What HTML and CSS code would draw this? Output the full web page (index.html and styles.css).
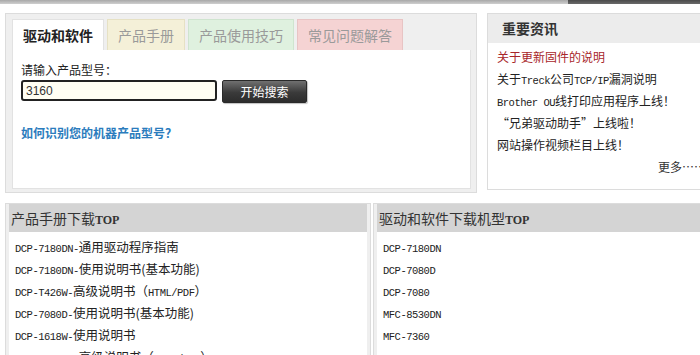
FILE: index.html
```html
<!DOCTYPE html>
<html lang="zh-CN">
<head>
    <meta charset="UTF-8">
    <title>服务与支持</title>
    <link rel="stylesheet" href="styles.css">
</head>
<body>
    <div class="topbar">
        <div class="topbar-light"></div>
        <div class="topbar-dark"></div>
    </div>
    <div class="page">
        <div class="row">
            <section class="search-box">
                <ul class="tabs">
                    <li class="tab tab-active">驱动和软件</li>
                    <li class="tab tab-manual">产品手册</li>
                    <li class="tab tab-tips">产品使用技巧</li>
                    <li class="tab tab-faq">常见问题解答</li>
                </ul>
                <div class="tab-body">
                    <label for="model">请输入产品型号：</label>
                    <div class="search-row">
                        <input id="model" type="text" value="3160">
                        <button>开始搜索</button>
                    </div>
                    <a class="help" href="#">如何识别您的机器产品型号？</a>
                </div>
            </section>
            <section class="news">
                <h3>重要资讯</h3>
                <ul>
                    <li class="hot">关于更新固件的说明</li>
                    <li>关于<span class="en">Treck</span>公司<span class="en">TCP/IP</span>漏洞说明</li>
                    <li><span class="en">Brother OU</span>线打印应用程序上线！</li>
                    <li>“兄弟驱动助手”上线啦！</li>
                    <li>网站操作视频栏目上线！</li>
                </ul>
                <div class="more">更多……</div>
            </section>
        </div>
        <div class="row row-bottom">
            <section class="top-list top-manuals">
                <h3>产品手册下载<span class="cap">TOP</span></h3>
                <ul>
                    <li><span class="en">DCP-7180DN-</span>通用驱动程序指南</li>
                    <li><span class="en">DCP-7180DN-</span>使用说明书(基本功能)</li>
                    <li><span class="en">DCP-T426W-</span>高级说明书（<span class="en">HTML/PDF</span>）</li>
                    <li><span class="en">DCP-7080D-</span>使用说明书(基本功能)</li>
                    <li><span class="en">DCP-1618W-</span>使用说明书</li>
                    <li><span class="en">DCP-T725DW-</span>高级说明书（<span class="en">HTML/PDF</span>）</li>
                </ul>
            </section>
            <section class="top-list top-drivers">
                <h3>驱动和软件下载机型<span class="cap">TOP</span></h3>
                <ul>
                    <li><span class="en">DCP-7180DN</span></li>
                    <li><span class="en">DCP-7080D</span></li>
                    <li><span class="en">DCP-7080</span></li>
                    <li><span class="en">MFC-8530DN</span></li>
                    <li><span class="en">MFC-7360</span></li>
                    <li><span class="en">DCP-B7520DN</span></li>
                </ul>
            </section>
        </div>
    </div>
</body>
</html>
```

FILE: styles.css
```css
body {
    margin: 0;
    background: #fff;
    color: #222;
    font-family: "Noto Sans CJK SC", "Liberation Sans", sans-serif;
    font-size: 12px;
    overflow: hidden;
}
ul {
    list-style: none;
    margin: 0;
    padding: 0;
}
h3 {
    margin: 0;
}
.en {
    font-family: "Liberation Mono", "Noto Sans CJK SC", monospace;
    font-size: 10.5px;
    letter-spacing: -0.5px;
    line-height: 10px;
}

/* top strip */
.topbar {
    display: flex;
    height: 4px;
}
.topbar-light {
    width: 568px;
    background: linear-gradient(#a8a8a8, #cfcfcf);
}
.topbar-dark {
    flex: 1;
    background: linear-gradient(#4a4a4a, #6a6a6a);
}

.page {
    padding: 9px 0 0 5px;
}
.row {
    display: flex;
    align-items: flex-start;
    gap: 10px;
}
.row-bottom {
    margin-top: 10px;
    gap: 2px;
}

/* search box */
.search-box {
    box-sizing: border-box;
    width: 472px;
    height: 180px;
    flex-shrink: 0;
    background: #efefef;
    border: 1px solid #dcdcdc;
    padding: 5px 5px 3px 6px;
    display: flex;
    flex-direction: column;
}
.tabs {
    display: flex;
    gap: 3px;
}
.tab {
    box-sizing: border-box;
    height: 31px;
    line-height: 30px;
    padding: 0 10px;
    font-size: 14px;
    color: #9a9a9a;
    border: 1px solid transparent;
    border-bottom: none;
}
.tab-active {
    background: #fff;
    color: #222;
    font-weight: bold;
    border-color: #e2e2e2;
}
.tab-manual {
    background: #f4f0d8;
    border-color: #e6e1c4;
}
.tab-tips {
    background: #dff1df;
    border-color: #cfe4cf;
}
.tab-faq {
    background: #f5d3d3;
    border-color: #e8c4c4;
}
.tab-body {
    flex: 1;
    background: #fff;
    border: 1px solid #e2e2e2;
    border-top: none;
    padding: 12px 8px 0 8px;
}
.tab-body label {
    display: block;
    line-height: 16px;
    color: #222;
}
.search-row {
    display: flex;
    margin-top: 2px;
}
.search-row input {
    box-sizing: border-box;
    width: 196px;
    height: 21px;
    margin: 0;
    padding: 0 3px;
    border: 2px solid #222;
    border-radius: 3px;
    background: #fffef3;
    font-family: "Liberation Sans", sans-serif;
    font-size: 12px;
    color: #333;
}
.search-row button {
    box-sizing: border-box;
    width: 85px;
    height: 23px;
    margin-left: 5px;
    border: 1px solid #2a2a2a;
    border-radius: 2px;
    background: linear-gradient(#707070, #3a3a3a 55%, #2c2c2c);
    color: #fff;
    font-family: "Noto Sans CJK SC", sans-serif;
    font-size: 12px;
    box-shadow: 1px 1px 1px rgba(0, 0, 0, 0.25);
}
.help {
    display: block;
    margin-top: 22px;
    line-height: 16px;
    color: #2b7cbd;
    font-weight: bold;
    text-decoration: none;
}

/* news */
.news {
    box-sizing: border-box;
    width: 230px;
    flex-shrink: 0;
    border: 1px solid #dcdcdc;
    background: #fff;
    padding-bottom: 11px;
}
.news h3 {
    height: 29px;
    line-height: 28px;
    padding-left: 14px;
    background: #ececec;
    font-size: 14px;
    color: #333;
}
.news ul {
    padding: 3px 0 0 9px;
}
.news li {
    height: 22px;
    line-height: 22px;
}
.news .hot {
    color: #a8262a;
}
.more {
    line-height: 22px;
    text-align: right;
    padding-right: 10px;
    color: #333;
}

/* top lists */
.top-list {
    box-sizing: border-box;
    flex-shrink: 0;
    height: 170px;
    background: #efefef;
    border: 1px solid #dcdcdc;
    padding: 0 3px;
}
.top-manuals {
    width: 366px;
}
.top-drivers {
    width: 340px;
}
.top-list h3 {
    height: 28px;
    line-height: 29px;
    padding-left: 2px;
    background: #d4d4d4;
    font-size: 14px;
    font-weight: normal;
    color: #333;
}
.top-list .cap {
    font-family: "Liberation Serif", serif;
    font-weight: bold;
    font-size: 12px;
}
.top-list ul {
    height: 100%;
    background: #fff;
    padding: 4px 0 0 6px;
}
.top-list li {
    height: 22px;
    line-height: 22px;
    font-size: 12.5px;
    color: #222;
}
```
